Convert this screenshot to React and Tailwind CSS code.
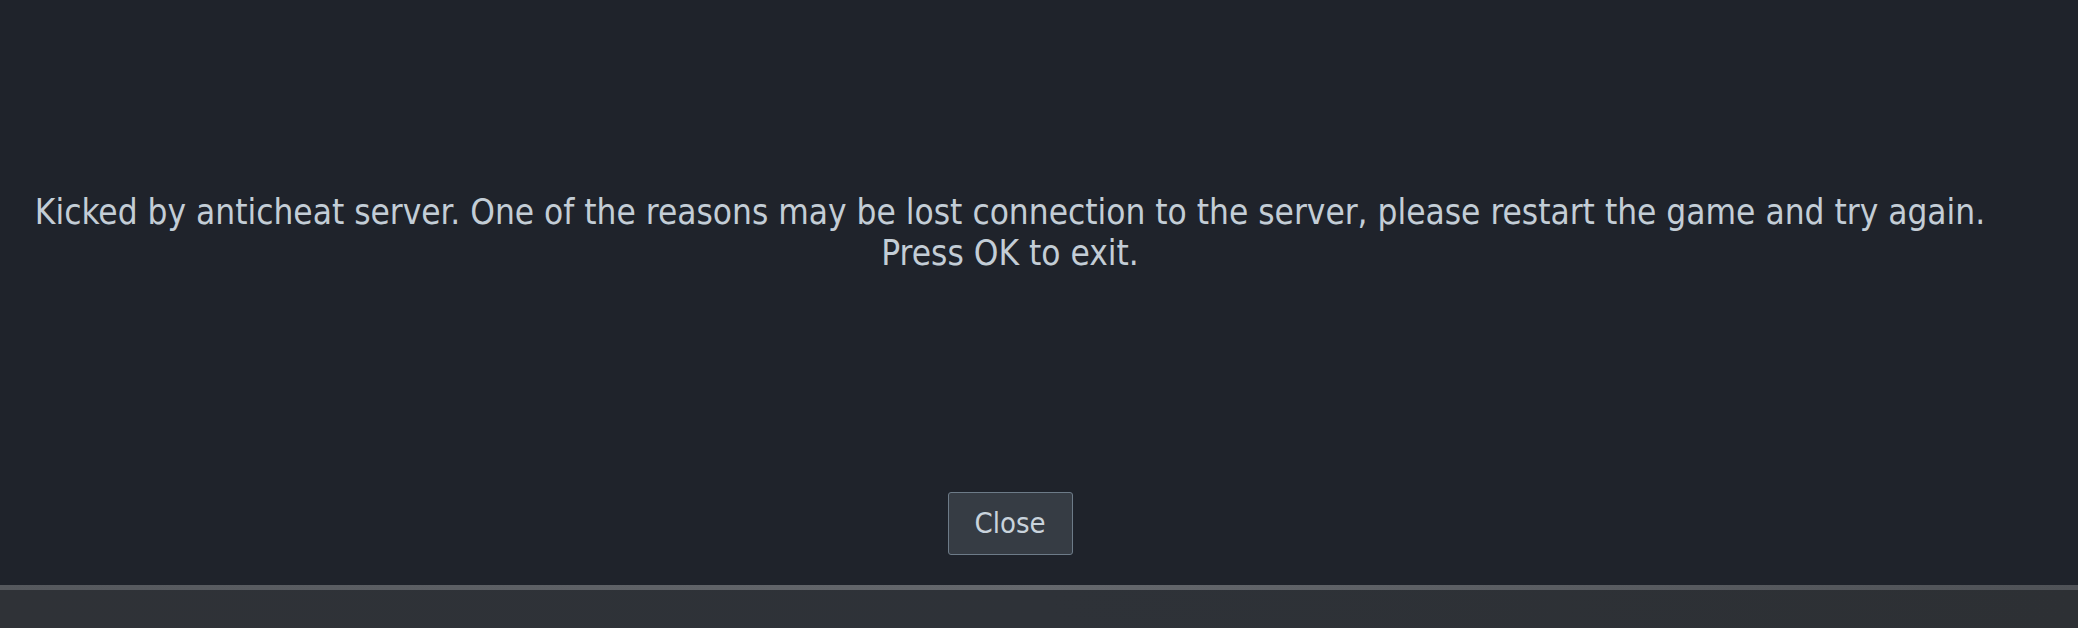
import React from 'react';

export default function App() {
  return (
    <div className="flex h-[628px] w-full flex-col bg-[#1f232b] font-['DejaVu_Sans_Condensed','DejaVu_Sans',sans-serif] font-stretch-condensed">
      <div className="flex flex-1 flex-col items-center pr-[58px]">
        <div className="mt-[192px] text-center text-[34.9px] leading-[41px] text-[#c3cdd6]">
          <p>Kicked by anticheat server. One of the reasons may be lost connection to the server, please restart the game and try again.</p>
          <p>Press OK to exit.</p>
        </div>
        <button className="mt-[218px] h-[63px] w-[125px] rounded-[3px] border border-[#6d7b88] bg-[#363c44] text-[29px] text-[#c9d3dc]">
          Close
        </button>
      </div>
      <div className="h-[5px] bg-gradient-to-r from-[#55585d] via-[#65686d] to-[#4f5257]" />
      <div className="h-[38px] bg-gradient-to-r from-[#2f3237] via-[#2e3238] to-[#2d3034]" />
    </div>
  );
}
